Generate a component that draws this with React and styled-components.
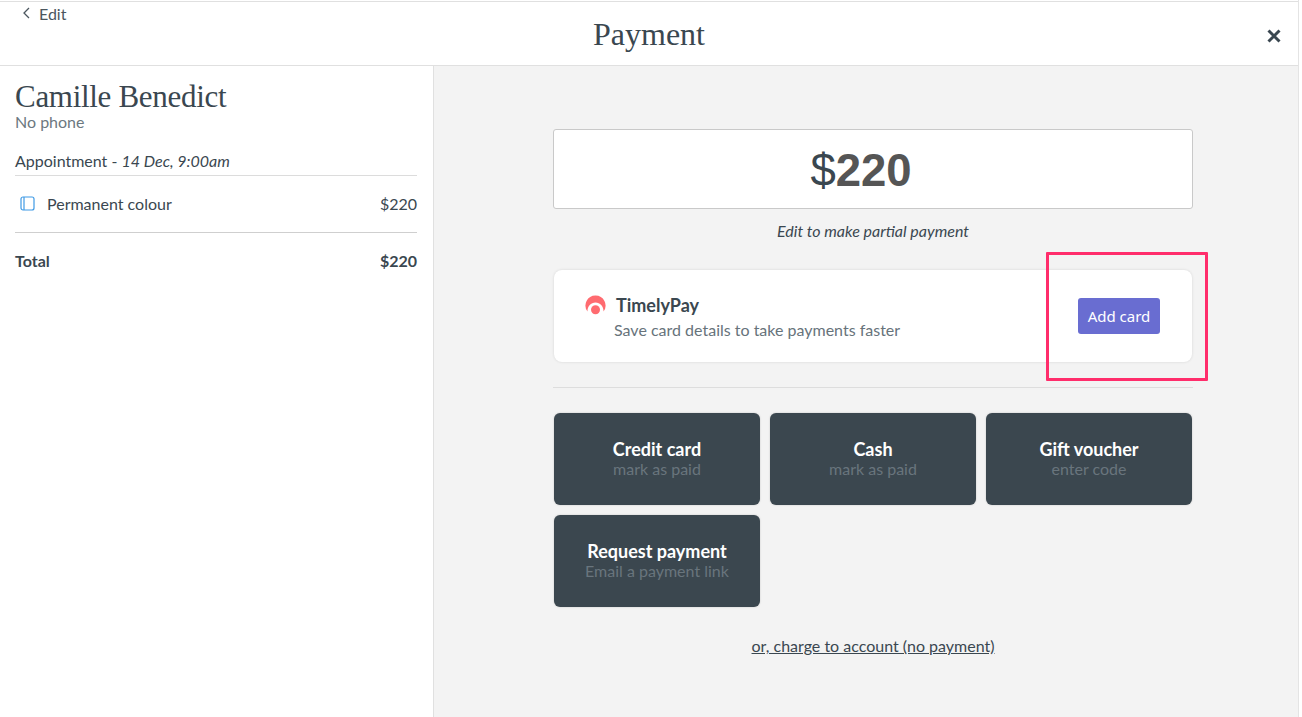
import React from "react";
import styled, { createGlobalStyle } from "styled-components";

const Global = createGlobalStyle`
  html, body { margin: 0; padding: 0; background: #fff; }
  body { font-family: Lato, "Liberation Sans", sans-serif; color: #3a4750; }
`;

const Page = styled.div`
  position: relative;
  width: 1298px;
  height: 717px;
  overflow: hidden;
  display: flex;
  flex-direction: column;
  background: #fff;
  border-right: 1px solid #e4e4e4;
`;

const Header = styled.header`
  margin-top: 1px;
  border-top: 1px solid #e0e0e0;
  border-bottom: 1px solid #e0e0e0;
  display: grid;
  grid-template-columns: 1fr auto 1fr;
  height: 63px;
  flex: none;
`;

const BackLink = styled.a`
  display: flex;
  align-items: center;
  gap: 8px;
  height: 22px;
  padding-left: 22px;
  font-size: 16px;
  color: #4b565e;
  align-self: start;
`;

const Title = styled.h1`
  margin: 0;
  font-family: "Liberation Serif", serif;
  font-weight: 400;
  font-size: 32px;
  line-height: 65px;
  color: #3a4750;
`;

const CloseButton = styled.button`
  justify-self: end;
  align-self: center;
  border: 0;
  background: none;
  padding: 0;
  margin: 2px 16px 0 0;
  width: 16px;
  height: 16px;
  color: #3a4750;
  display: flex;
`;

const Body = styled.div`
  flex: 1;
  display: flex;
  min-height: 0;
`;

const Sidebar = styled.aside`
  width: 402px;
  flex: none;
  border-right: 1px solid #e0e0e0;
  padding: 0 16px 0 15px;
`;

const ClientName = styled.h2`
  margin: 15px 0 0;
  font-family: "Liberation Serif", serif;
  font-weight: 400;
  font-size: 31px;
  letter-spacing: -0.3px;
  line-height: 32px;
  color: #3a4750;
`;

const Phone = styled.div`
  font-size: 16px;
  line-height: 18px;
  color: #6c7880;
`;

const Appointment = styled.div`
  margin-top: 21px;
  padding-bottom: 5px;
  font-size: 16px;
  line-height: 18px;
  border-bottom: 1px solid #dcdcdc;
  em { font-style: italic; }
`;

const Row = styled.div`
  display: flex;
  align-items: center;
  justify-content: space-between;
  font-size: 16px;
  font-weight: ${(p) => (p.$bold ? 700 : 400)};
`;

const ServiceRow = styled(Row)`
  height: 54px;
  padding-bottom: 2px;
  border-bottom: 1px solid #cfcfcf;
`;

const TotalRow = styled(Row)`
  height: 54px;
`;

const ServiceName = styled.span`
  display: flex;
  align-items: center;
  gap: 12px;
  padding-left: 5px;
`;

const Main = styled.main`
  flex: 1;
  background: #f3f3f3;
  padding: 63px 0 0 119px;
  box-sizing: border-box;
`;

const Column = styled.div`
  width: 640px;
`;

const AmountBox = styled.div`
  height: 80px;
  box-sizing: border-box;
  background: #fff;
  border: 1px solid #c9c9c9;
  border-radius: 3px;
  padding: 3px 24px 0 0;
  display: flex;
  align-items: center;
  justify-content: center;
  font-family: "Liberation Sans", sans-serif;
  font-size: 45.500px;
  font-weight: 700;
  color: #555;
`;

const Currency = styled.span`
  font-weight: 400;
  color: #3a4750;
`;

const Hint = styled.div`
  margin-top: 13px;
  text-align: center;
  font-size: 16px;
  line-height: 18px;
  font-style: italic;
`;

const PayCard = styled.section`
  margin: 30px 1px 0;
  height: 92px;
  box-sizing: border-box;
  background: #fff;
  border-radius: 8px;
  box-shadow: 0 0 3px rgba(0, 0, 0, 0.12);
  display: flex;
  align-items: center;
  justify-content: space-between;
  padding: 1px 32px 0 31px;
`;

const PayInfo = styled.div`
  display: flex;
  flex-direction: column;
`;

const Brand = styled.div`
  display: flex;
  align-items: center;
  gap: 10px;
  font-size: 18px;
  font-weight: 700;
  line-height: 24px;
`;

const PayText = styled.div`
  margin: 3px 0 0 29px;
  font-size: 16px;
  line-height: 20px;
  color: #67737b;
`;

const AddCard = styled.button`
  width: 82px;
  height: 36px;
  margin-top: -1px;
  border: 0;
  border-radius: 3px;
  background: #696dd1;
  color: #fff;
  font-family: "Noto Sans", sans-serif;
  font-size: 15px;
  padding: 0;
`;

const Divider = styled.hr`
  margin: 25px 0 25px;
  border: 0;
  border-top: 1px solid #dddddd;
`;

const Methods = styled.div`
  display: grid;
  grid-template-columns: repeat(3, 206px);
  grid-auto-rows: 92px;
  gap: 10px;
  padding-left: 1px;
`;

const Method = styled.button`
  border: 0;
  padding: 0 0 2px;
  border-radius: 6px;
  background: #3b474f;
  box-shadow: 0 0 2px rgba(0, 0, 0, 0.2);
  display: flex;
  flex-direction: column;
  align-items: center;
  justify-content: center;
  font-family: inherit;
`;

const MethodName = styled.span`
  font-size: 18px;
  line-height: 22px;
  font-weight: 700;
  color: #fff;
`;

const MethodSub = styled.span`
  font-size: 16px;
  line-height: 18px;
  color: #69757d;
`;

const AccountLink = styled.a`
  display: block;
  margin-top: 30px;
  text-align: center;
  font-size: 16px;
  line-height: 18px;
  text-decoration: underline;
`;

const Highlight = styled.div`
  position: absolute;
  left: 1046px;
  top: 252px;
  width: 162px;
  height: 129px;
  box-sizing: border-box;
  border: 3px solid #ff2d6b;
  border-radius: 1px;
  pointer-events: none;
`;

const Chevron = () => (
  <svg width="9" height="14" viewBox="0 0 9 14" fill="none" stroke="#4b565e" strokeWidth="1.3">
    <path d="M7 2 2 7l5 5" />
  </svg>
);

const CloseIcon = () => (
  <svg width="16" height="16" viewBox="0 0 16 16" fill="none" stroke="currentColor" strokeWidth="3">
    <path d="M2.5 2.5 13.5 13.5M13.5 2.5 2.5 13.5" />
  </svg>
);

const ServiceIcon = () => (
  <svg width="15" height="15" viewBox="0 0 15 15" fill="none" stroke="#3f9ae5" strokeWidth="1.2">
    <rect x="1" y="1" width="13" height="13" rx="2" />
    <path d="M4 1v13" />
  </svg>
);

const TimelyLogo = () => (
  <svg width="21" height="21" viewBox="0 0 21 21">
    <path
      fill="#ff6b70"
      d="M10.5.5a10 10 0 0 1 8 16c.3-4.8-3.2-9-8-9s-8.300 4.200-8 9a10 10 0 0 1 8-16Z"
    />
    <circle cx="10.500" cy="14.800" r="4.500" fill="#ff6b70" />
  </svg>
);

const methods = [
  ["Credit card", "mark as paid"],
  ["Cash", "mark as paid"],
  ["Gift voucher", "enter code"],
  ["Request payment", "Email a payment link"],
];

export default function App() {
  return (
    <Page>
      <Global />
      <Header>
        <BackLink>
          <Chevron />
          Edit
        </BackLink>
        <Title>Payment</Title>
        <CloseButton aria-label="Close">
          <CloseIcon />
        </CloseButton>
      </Header>
      <Body>
        <Sidebar>
          <ClientName>Camille Benedict</ClientName>
          <Phone>No phone</Phone>
          <Appointment>
            Appointment - <em>14 Dec, 9:00am</em>
          </Appointment>
          <ServiceRow>
            <ServiceName>
              <ServiceIcon />
              Permanent colour
            </ServiceName>
            <span>$220</span>
          </ServiceRow>
          <TotalRow $bold>
            <span>Total</span>
            <span>$220</span>
          </TotalRow>
        </Sidebar>
        <Main>
          <Column>
            <AmountBox>
              <Currency>$</Currency>220
            </AmountBox>
            <Hint>Edit to make partial payment</Hint>
            <PayCard>
              <PayInfo>
                <Brand>
                  <TimelyLogo />
                  TimelyPay
                </Brand>
                <PayText>Save card details to take payments faster</PayText>
              </PayInfo>
              <AddCard>Add card</AddCard>
            </PayCard>
            <Divider />
            <Methods>
              {methods.map(([name, sub]) => (
                <Method key={name}>
                  <MethodName>{name}</MethodName>
                  <MethodSub>{sub}</MethodSub>
                </Method>
              ))}
            </Methods>
            <AccountLink>or, charge to account (no payment)</AccountLink>
          </Column>
        </Main>
      </Body>
      <Highlight />
    </Page>
  );
}
